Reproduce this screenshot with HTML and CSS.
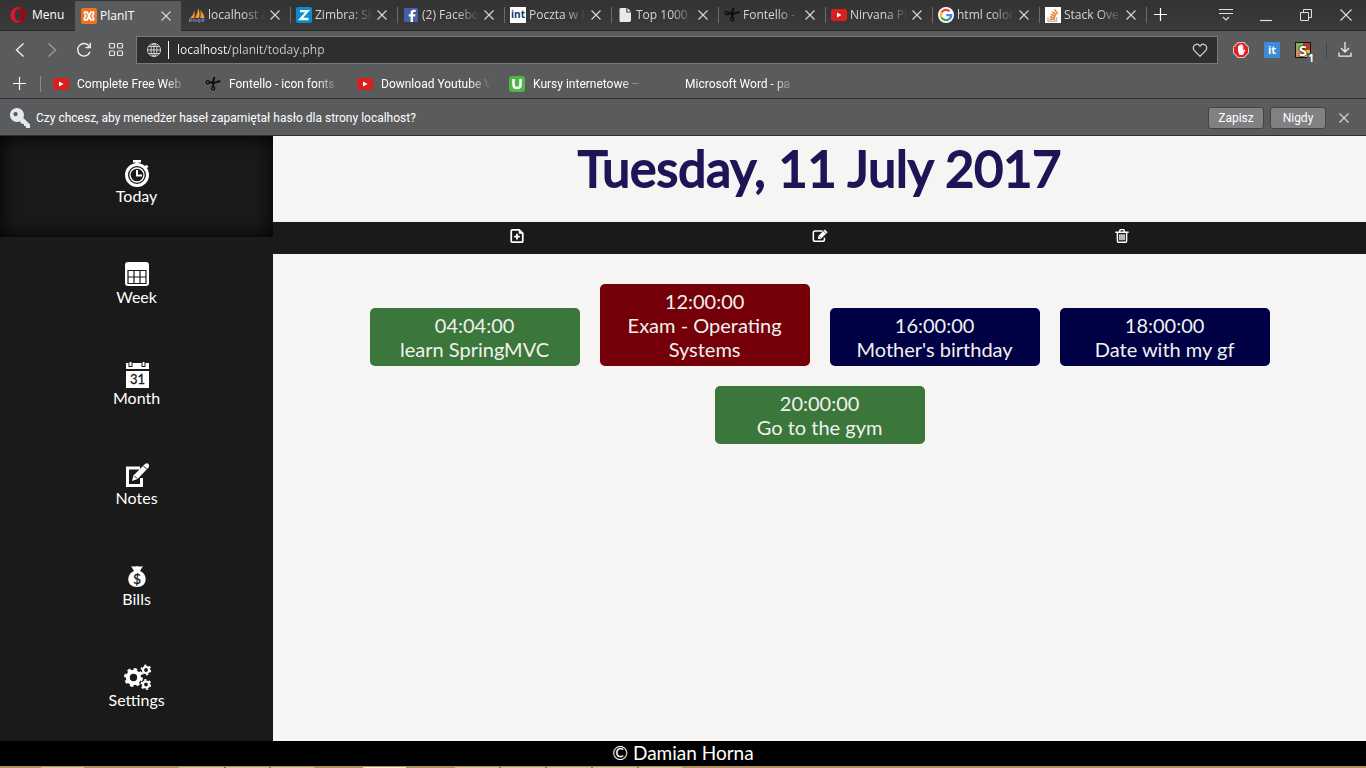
FILE: index.html
```html
<!DOCTYPE html>
<html lang="pl">
<head>
<meta charset="utf-8">
<meta name="viewport" content="width=device-width, initial-scale=1">
<title>PlanIT</title>
<link rel="stylesheet" href="styles.css">
</head>
<body>
<svg class="defs" aria-hidden="true">
  <symbol id="close" viewBox="0 0 12 12"><path d="M1.500 1.500l9 9M10.500 1.500l-9 9" fill="none" stroke="currentColor" stroke-width="1.100"/></symbol>
  <symbol id="plus" viewBox="0 0 14 14"><path d="M6.500 0v13M0 6.500h13" fill="none" stroke="currentColor" stroke-width="1.200"/></symbol>
  <symbol id="youtube" viewBox="0 0 16 16"><rect y="2" width="16" height="12" rx="2.500" fill="#d9201f"/><path d="M6 5.500v5l4.500-2.500z" fill="#fff"/></symbol>
  <symbol id="scissors" viewBox="0 0 16 16"><g fill="none" stroke="#0c0c0c"><circle cx="2.700" cy="6.300" r="1.600" stroke-width="1.200"/><circle cx="8.200" cy="12.300" r="1.600" stroke-width="1.200"/><path d="M4.300 6.300l5 .5 6-1.800M8.300 10.700l-.3-5L9.500 1" stroke-width="1.900"/></g></symbol>
</svg>

<header class="browser">
  <div class="tabbar">
    <button class="menu" type="button">
      <svg class="icon16" viewBox="0 0 16 16" aria-hidden="true"><ellipse cx="8" cy="8" rx="7.700" ry="7.900" fill="#e3132a"/><path d="M8 .100c10.300 0 10.300 15.800 0 15.800 4-1 4-14.800 0-15.800z" fill="#a3020e"/><ellipse cx="8" cy="8" rx="3.400" ry="5.900" fill="#373737"/></svg>
      Menu
    </button>
    <nav class="tabs" aria-label="Karty">
      <div class="tab tab-active">
        <svg class="icon16" viewBox="0 0 16 16" aria-hidden="true"><rect width="16" height="16" rx="2" fill="#ef7422"/><path d="M3.500 6V4H6l4 8h2.500v-2.500L11 8l1.500-1.500V4H10l-4 8H3.500V9.500L5 8 3.500 6.500" fill="none" stroke="#fff" stroke-width="1.700" stroke-linejoin="round"/></svg>
        <a class="tab-title" href="#">PlanIT</a>
        <button class="close" type="button" aria-label="Zamknij"><svg><use href="#close"/></svg></button>
      </div>
      <div class="tab">
        <svg class="icon16" viewBox="0 0 16 16" aria-hidden="true"><path d="M1 11c3-2 4-5 4-8 1 3 1 6 0 8zM6 11c2-4 3-7 3-10 2 4 2 7 1 10zM11 11c1-3 1-5 0-8 3 3 4 5 4.500 8z" fill="#f29a2e"/><path d="M.5 15v-3h2.500v2h-2M5 11.500V15m0-2h2v2M9 12v3h2v-2.500H9M13 15v-3h2v2h-2" fill="none" stroke="#7c80bc"/></svg>
        <a class="tab-title" href="#">localhost /</a>
        <button class="close" type="button" aria-label="Zamknij"><svg><use href="#close"/></svg></button>
      </div>
      <div class="tab">
        <svg class="icon16" viewBox="0 0 16 16" aria-hidden="true"><rect width="16" height="16" rx="2" fill="#0a8bcc"/><path d="M4 4.200h7.500L4.500 12H12.500" fill="none" stroke="#fff" stroke-width="2.300"/></svg>
        <a class="tab-title" href="#">Zimbra: Sk</a>
        <button class="close" type="button" aria-label="Zamknij"><svg><use href="#close"/></svg></button>
      </div>
      <div class="tab">
        <svg class="icon16" viewBox="0 0 16 16" aria-hidden="true"><rect x="1" y="1" width="14" height="14" rx="1" fill="#4560a8"/><path d="M10 15V9.500h2.200l.3-2.300H10V6q0-1.100 1.200-1.100h1.400V2.800q-5-.8-5 2.700v1.700H5.700v2.300h1.900V15z" fill="#fff"/></svg>
        <a class="tab-title" href="#">(2) Facebo</a>
        <button class="close" type="button" aria-label="Zamknij"><svg><use href="#close"/></svg></button>
      </div>
      <div class="tab">
        <span class="fav fav-int">int</span>
        <a class="tab-title" href="#">Poczta w I</a>
        <button class="close" type="button" aria-label="Zamknij"><svg><use href="#close"/></svg></button>
      </div>
      <div class="tab">
        <svg class="icon16" viewBox="0 0 16 16" aria-hidden="true"><path d="M3.500 1h5.800v4.500H14V13q0 2-1.500 2h-9Q2.500 15 2.500 13.500v-11Q2.500 1 3.500 1zM10.300 1L14 4.600h-3.700z" fill="#e6e9ee"/></svg>
        <a class="tab-title" href="#">Top 1000</a>
        <button class="close" type="button" aria-label="Zamknij"><svg><use href="#close"/></svg></button>
      </div>
      <div class="tab">
        <svg class="icon16" aria-hidden="true"><use href="#scissors"/></svg>
        <a class="tab-title" href="#">Fontello -</a>
        <button class="close" type="button" aria-label="Zamknij"><svg><use href="#close"/></svg></button>
      </div>
      <div class="tab">
        <svg class="icon16" aria-hidden="true"><use href="#youtube"/></svg>
        <a class="tab-title" href="#">Nirvana Pl</a>
        <button class="close" type="button" aria-label="Zamknij"><svg><use href="#close"/></svg></button>
      </div>
      <div class="tab">
        <svg class="icon16" viewBox="0 0 16 16" aria-hidden="true"><circle cx="8" cy="8" r="8" fill="#fff"/><g fill="none" stroke-width="2.300"><path d="M11.600 4.400A5.200 5.200 0 0 0 3.500 5.500" stroke="#ea4335"/><path d="M3.500 5.500a5.200 5.200 0 0 0 0 5" stroke="#fbbc05"/><path d="M3.500 10.500a5.200 5.200 0 0 0 7.800 1.500" stroke="#34a853"/><path d="M11.300 12q1.800-1.500 1.900-3.900H8.200" stroke="#4285f4"/></g></svg>
        <a class="tab-title" href="#">html color</a>
        <button class="close" type="button" aria-label="Zamknij"><svg><use href="#close"/></svg></button>
      </div>
      <div class="tab">
        <svg class="icon16" viewBox="0 0 16 16" aria-hidden="true"><rect width="16" height="16" fill="#fff"/><path d="M3 10v4.300h8.500V10" fill="none" stroke="#bcbbbb" stroke-width="1.400"/><path d="M4.700 12.300h5.200M4.900 9.800l5.100 1.100M5.700 7.200l4.800 2.300M7.300 4.600l4 3.500M9.700 2.500l3 4.300" stroke="#ef7c23" stroke-width="1.400"/></svg>
        <a class="tab-title" href="#">Stack Ove</a>
        <button class="close" type="button" aria-label="Zamknij"><svg><use href="#close"/></svg></button>
      </div>
    </nav>
    <button class="newtab" type="button" aria-label="Nowa karta"><svg><use href="#plus"/></svg></button>
    <div class="winctl">
      <button type="button" aria-label="Menu kart"><svg viewBox="0 0 16 14"><path d="M1 1.500h14M1 5.500h14M5 9l3 3 3-3" fill="none" stroke="currentColor" stroke-width="1.100"/></svg></button>
      <button type="button" aria-label="Minimalizuj"><svg viewBox="0 0 16 14"><path d="M2 12.500h12" stroke="currentColor" stroke-width="1.200"/></svg></button>
      <button type="button" aria-label="Przywróć"><svg viewBox="0 0 16 14"><path d="M2.500 4.500h8v8h-8zM5.500 4.500v-3h8v8h-3" fill="none" stroke="currentColor"/></svg></button>
      <button type="button" aria-label="Zamknij okno"><svg viewBox="0 0 16 14"><path d="M2.500 1.500l11 11M13.500 1.500l-11 11" stroke="currentColor" stroke-width="1.100"/></svg></button>
    </div>
  </div>

  <div class="toolbar">
    <div class="navbtns">
      <button type="button" aria-label="Wstecz"><svg viewBox="0 0 16 16"><path d="M11.500 1.500L4.500 8l7 6.500" fill="none" stroke="#f0f0f0" stroke-width="1.400"/></svg></button>
      <button type="button" aria-label="Dalej"><svg viewBox="0 0 16 16"><path d="M4.500 1.500l7 6.500-7 6.500" fill="none" stroke="#97989a" stroke-width="1.400"/></svg></button>
      <button type="button" aria-label="Odśwież"><svg viewBox="0 0 16 16"><path d="M13.300 4.300A6.300 6.300 0 1 0 14 9.800M14.300.8v4.700H9.500" fill="none" stroke="#f0f0f0" stroke-width="1.400"/></svg></button>
      <button type="button" aria-label="Szybkie wybieranie"><svg viewBox="0 0 16 16"><g fill="none" stroke="#e6e6e6" stroke-width="1.200"><rect x="1.500" y="1.500" width="5" height="4.500" rx="1"/><rect x="9.500" y="1.500" width="5" height="4.500" rx="1"/><rect x="1.500" y="9" width="5" height="4.500" rx="1"/><rect x="9.500" y="9" width="5" height="4.500" rx="1"/></g></svg></button>
    </div>
    <div class="address">
      <svg class="icon16" viewBox="0 0 16 16" aria-hidden="true"><g fill="none" stroke="#d0d2d4"><circle cx="8" cy="8" r="6.500"/><ellipse cx="8" cy="8" rx="3" ry="6.500"/><path d="M8 1v14M1 8h14M2.500 4.500h11M2.500 11.500h11"/></g></svg>
      <input type="text" aria-label="Adres" value="localhost/planit/today.php">
      <button type="button" aria-label="Dodaj do zakładek"><svg viewBox="0 0 16 16"><path d="M8 14.300L2 8.200C-.5 4 4.800-.2 8 4.200 11.200-.2 16.500 4 14 8.200z" fill="none" stroke="#d0d2d4" stroke-width="1.200"/></svg></button>
    </div>
    <div class="extensions">
      <svg class="icon16" viewBox="0 0 16 16" aria-hidden="true"><path d="M5 0h6l5 5v6l-5 5H5l-5-5V5z" fill="#eee"/><path d="M5.300.8h5.400l4.500 4.500v5.400l-4.500 4.500H5.300L.8 10.700V5.300z" fill="#e32126"/><path d="M5 9V4.200q.7-.8 1.300 0V3q.7-.8 1.400 0v-.5q.7-.7 1.300 0v1q.7-.8 1.300.2V8.500l1.200-1q1.200 0 .6 1L10 13H6.500z" fill="#fff"/></svg>
      <span class="fav fav-it">it</span>
      <span class="fav fav-s">S<span class="count">1</span></span>
      <button type="button" class="download" aria-label="Pobrane"><svg viewBox="0 0 16 16"><path d="M8 0v9.500M4 6l4 4 4-4M2 10.500v3.700h12v-3.700" fill="none" stroke="#ededed" stroke-width="1.300"/></svg></button>
    </div>
  </div>

  <nav class="bookmarks" aria-label="Zakładki">
    <button class="newmark" type="button" aria-label="Dodaj"><svg><use href="#plus"/></svg></button>
    <a href="#"><svg class="icon16" aria-hidden="true"><use href="#youtube"/></svg><span>Complete Free Web</span></a>
    <a href="#"><svg class="icon16" aria-hidden="true"><use href="#scissors"/></svg><span>Fontello - icon fonts</span></a>
    <a href="#"><svg class="icon16" aria-hidden="true"><use href="#youtube"/></svg><span>Download Youtube V</span></a>
    <a href="#"><svg class="icon16" viewBox="0 0 16 16" aria-hidden="true"><rect width="16" height="16" rx="3" fill="#4db748"/><path d="M4.500 3v5.500q0 3.500 3.500 3.500t3.500-3.500V3" fill="none" stroke="#fff" stroke-width="2.500"/></svg><span>Kursy internetowe –</span></a>
    <a href="#"><i class="icon16"></i><span>Microsoft Word - pa</span></a>
  </nav>

  <div class="prompt" role="alert">
    <svg class="key" viewBox="0 0 20 20" aria-hidden="true"><path d="M7 0a7 7 0 1 1-.1 0zM5.500 4A2.100 2.100 0 1 0 5.600 4z" fill="#e6e9ec" fill-rule="evenodd"/><path d="M9 12.500L12.500 9l7.500 7.500V20h-4v-2h-2v-2h-2z" fill="#e6e9ec"/></svg>
    <p>Czy chcesz, aby menedżer haseł zapamiętał hasło dla strony localhost?</p>
    <button class="answer" type="button">Zapisz</button>
    <button class="answer" type="button">Nigdy</button>
    <button class="close" type="button" aria-label="Zamknij"><svg><use href="#close"/></svg></button>
  </div>
</header>

<div class="page">
  <nav class="sidebar" aria-label="PlanIT">
    <a class="current" href="#">
      <svg viewBox="0 0 28 28" aria-hidden="true"><path d="M10 1h8v2.500h-2.500V5h-3V3.500H10z" fill="#fff"/><path d="M21.500 7l2.500 2.500 1.500-2-2-1.500z" fill="#fff"/><circle cx="14" cy="16" r="10.500" fill="none" stroke="#fff" stroke-width="3"/><circle cx="14" cy="16" r="7" fill="none" stroke="#fff" stroke-width="1.300"/><path d="M14 11v5.500h5" fill="none" stroke="#fff" stroke-width="2"/></svg>Today</a>
    <a href="#">
      <svg viewBox="0 0 28 28" aria-hidden="true"><rect x="2" y="2" width="24" height="24" rx="3" fill="#fff"/><path d="M5 10.500h18v13H5zM5 17h18M11 10.500v13M17 10.500v13" fill="none" stroke="#1a1a1a" stroke-width="1.200"/></svg>Week</a>
    <a href="#">
      <svg viewBox="0 0 28 28" aria-hidden="true"><path d="M3 2h2.500v4h4V2h9v4h4V2H26v6H3zM3 10h23v17H3z" fill="#fff"/><path d="M6.500 1h2v4h-2zM19.500 1h2v4h-2z" fill="#fff"/><text x="14.500" y="23" text-anchor="middle" class="glyph-month">31</text></svg>Month</a>
    <a href="#">
      <svg viewBox="0 0 28 28" aria-hidden="true"><path d="M17 7H4.500v17.500h14V17" fill="none" stroke="#fff" stroke-width="3"/><path d="M9 20l1.500-5.500L22 3q2-1.500 3.500 0t0 3.500L14.500 18z" fill="#fff"/><path d="M11.500 15l2.500 2.500M20.500 5l3 3" stroke="#1a1a1a" stroke-width="1"/></svg>Notes</a>
    <a href="#">
      <svg viewBox="0 0 28 28" aria-hidden="true"><path d="M8 4q3 1 6 0 3 1 6 0l-3 5c8 3 8 16-3 16S3 12 11 9z" fill="#fff"/><text x="14" y="21.500" text-anchor="middle" class="glyph-dollar">$</text></svg>Bills</a>
    <a href="#">
      <svg viewBox="0 0 28 28" aria-hidden="true"><g fill="none" stroke="#fff"><circle cx="10.500" cy="14.500" r="5.700" stroke-width="4"/><circle cx="10.500" cy="14.500" r="8.200" stroke-width="2.500" stroke-dasharray="3.400 3.040"/><circle cx="23" cy="7" r="3" stroke-width="2.200"/><circle cx="23" cy="7" r="4.700" stroke-width="1.600" stroke-dasharray="2.300 2.620"/><circle cx="23" cy="21.500" r="3" stroke-width="2.200"/><circle cx="23" cy="21.500" r="4.700" stroke-width="1.600" stroke-dasharray="2.300 2.620"/></g></svg>Settings</a>
  </nav>

  <main class="content">
    <h1>Tuesday, 11 July 2017</h1>
    <div class="actions">
      <button type="button" aria-label="Add"><svg viewBox="0 0 18 18"><path d="M4 2h7.500l4 4v8.500q0 1.500-1.500 1.500H4q-1.500 0-1.500-1.500v-11Q2.500 2 4 2z" fill="none" stroke="#fff" stroke-width="2"/><path d="M11 1.500V6.500h4.500z" fill="#fff"/><path d="M9 6.500v6.500M5.800 9.800h6.400" stroke="#fff" stroke-width="2"/></svg></button>
      <button type="button" aria-label="Edit"><svg viewBox="0 0 18 18"><path d="M12 3.300H3.500q-2 0-2 2v7.500q0 2 2 2H12q2 0 2-2V11" fill="none" stroke="#fff" stroke-width="1.700"/><path d="M6.800 12.500V9.300L14.500 1.700l3 3-7.700 7.800z" fill="#fff"/><path d="M8 9.500l2 2M13 3.500l2.500 2.500" stroke="#1a1a1a" stroke-width=".8"/></svg></button>
      <button type="button" aria-label="Delete"><svg viewBox="0 0 18 18"><path d="M1.500 4.700h15M6 4.500L7 1.800h4l1 2.700M3.800 5v9.500q0 1.500 1.200 1.500h8q1.200 0 1.200-1.500V5M6.700 7v6.800M9 7v6.800M11.300 7v6.800" fill="none" stroke="#fff" stroke-width="1.600"/></svg></button>
    </div>
    <div class="events">
      <article class="event green"><time>04:04:00</time>learn SpringMVC</article>
      <article class="event red"><time>12:00:00</time>Exam - Operating Systems</article>
      <article class="event navy"><time>16:00:00</time>Mother's birthday</article>
      <article class="event navy"><time>18:00:00</time>Date with my gf</article>
      <article class="event green"><time>20:00:00</time>Go to the gym</article>
    </div>
  </main>
</div>

<footer class="footer">© Damian Horna</footer>
<div class="taskbar"></div>
</body>
</html>
```
FILE: styles.css
```css
* { box-sizing: border-box; }

body {
  margin: 0;
  min-height: 100vh;
  display: flex;
  flex-direction: column;
  font-family: Lato, sans-serif;
  background: #000;
}

button {
  padding: 0;
  border: 0;
  background: none;
  color: inherit;
  font: inherit;
}

a { color: inherit; text-decoration: none; }
svg { display: block; }
.defs { display: none; }
.icon16 { width: 16px; height: 16px; flex: none; }

/* Browser chrome */
.browser {
  background: #5a5b5d;
  color: #fff;
  font: 12px/16px "Open Sans", sans-serif;
}

.tabbar {
  display: flex;
  height: 31px;
  background: linear-gradient(#333, #3a3a3a);
  border-bottom: 1px solid #262626;
}

.menu {
  width: 75px;
  flex: none;
  display: flex;
  align-items: center;
  gap: 6px;
  padding-left: 10px;
}

.tabs { display: flex; min-width: 0; }

.tab {
  width: 107px;
  min-width: 0;
  display: flex;
  align-items: center;
  gap: 3px;
  padding: 0 10px 0 5px;
  color: #d6d6d6;
  background: linear-gradient(#6a6a6a, #6a6a6a) right center / 1px 16px no-repeat;
}

.tab-active {
  width: 106px;
  margin: 1px 3px -1px 0;
  padding: 0 9px 1px 6px;
  color: #fff;
  background: #5a5b5d;
}

.tab-title {
  flex: 1;
  min-width: 0;
  overflow: hidden;
  white-space: nowrap;
  mask-image: linear-gradient(to right, #000 60%, transparent);
}

.tab-active .tab-title { mask-image: none; }

.close svg { width: 12px; height: 12px; }
.close { color: #d8dadc; flex: none; }

.newtab { width: 28px; flex: none; }
.newtab svg, .newmark svg { width: 14px; height: 14px; margin: auto; }

.winctl {
  margin-left: auto;
  display: flex;
  color: #e0e0e0;
}
.winctl button { width: 40px; }
.winctl svg { width: 16px; height: 14px; margin: auto; }

.fav {
  position: relative;
  width: 16px;
  height: 16px;
  flex: none;
  text-align: center;
  font-weight: 700;
}
.fav-int { background: #fff; color: #153a6b; font-size: 10px; line-height: 15px; }
.fav-it { background: #3f8bd6; border-radius: 1px; font-size: 11px; line-height: 15px; }
.fav-s {
  background: conic-gradient(#b83b2c 25%, #e8c83a 0 50%, #d98b63 0 75%, #8bb04c 0);
  border: 1px solid #111;
  font-size: 15px;
  line-height: 14px;
  text-shadow: 0 0 1px #000, 0 0 2px #000;
}
.count {
  position: absolute;
  right: -5px;
  bottom: -6px;
  padding: 0 1px;
  background: #5a5b5d;
  font-size: 10px;
  line-height: 10px;
  text-shadow: none;
}

.toolbar {
  display: flex;
  align-items: center;
  height: 37px;
}

.navbtns { display: flex; gap: 16px; padding: 0 12px; }
.navbtns svg { width: 16px; height: 16px; }

.address {
  flex: 1;
  display: flex;
  align-items: center;
  height: 28px;
  padding: 0 9px;
  background: #2d2f2e;
  border: 1px solid #77787a;
}
.address svg { width: 16px; height: 16px; }
.address input {
  flex: 1;
  min-width: 0;
  height: 18px;
  margin-left: 6px;
  padding: 0 0 0 8px;
  border: 0;
  border-left: 1px solid #fff;
  font: 12px/18px "Open Sans", sans-serif;
  color: transparent;
  background: linear-gradient(to right, #fff 60px, #d0d1d1 60px) text;
}

.extensions { display: flex; align-items: center; gap: 15px; padding: 0 13px 0 15px; }
.download { border-left: 1px solid #454648; padding-left: 10px; }
.download svg { width: 16px; height: 16px; }

.bookmarks {
  display: flex;
  align-items: center;
  height: 31px;
  padding-top: 1px;
  border-bottom: 1px solid #2e2e30;
  font-family: Roboto, sans-serif;
}
.newmark {
  width: 41px;
  height: 16px;
  border-right: 1px solid #8a8b8d;
}
.bookmarks a {
  display: flex;
  align-items: center;
  gap: 8px;
  width: 152px;
  padding-left: 12px;
}
.bookmarks span {
  width: 110px;
  overflow: hidden;
  white-space: nowrap;
  mask-image: linear-gradient(to right, #000 80%, transparent);
}

.prompt {
  display: flex;
  align-items: center;
  height: 37px;
  padding: 1px 16px 0 10px;
  gap: 6px;
  border-bottom: 1px solid #2e2e30;
  font-family: Roboto, sans-serif;
}
.prompt p { flex: 1; margin: 0; }
.key { width: 20px; height: 20px; flex: none; }
.answer {
  min-width: 56px;
  height: 22px;
  padding: 0 9px;
  border: 1px solid #424345;
  border-radius: 3px;
  background: #808183;
}
.prompt .close { margin-left: 6px; }

/* Planner */
.page { flex: 1; display: flex; }

.sidebar {
  width: 20%;
  display: flex;
  flex-direction: column;
  background: #1a1a1a;
  color: #fff;
  font-size: 16px;
  line-height: 18px;
}
.sidebar a {
  flex: 1;
  display: flex;
  flex-direction: column;
  align-items: center;
  padding: 23px 0 31px;
}
.sidebar svg { width: 28px; height: 28px; }
.sidebar .current { box-shadow: inset 0 0 20px #000; }
.glyph-month { font: 13px Lato, sans-serif; fill: #1a1a1a; stroke: #1a1a1a; stroke-width: .3px; }
.glyph-dollar { font: 14px Lato, sans-serif; fill: #1a1a1a; stroke: #1a1a1a; stroke-width: .3px; }

.content { flex: 1; background: #f6f5f3; }

h1 {
  margin: 0;
  padding-bottom: 22px;
  text-align: center;
  font-size: 50px;
  font-weight: 400;
  line-height: 64px;
  color: #201457;
  -webkit-text-stroke: 2px #201457;
}

.actions {
  display: grid;
  grid-template-columns: repeat(3, 1fr);
  padding: 0 8.5%;
  height: 32px;
  background: #1a1a1a;
}
.actions svg { width: 16px; height: 16px; margin: 0 auto 4px; }

.events {
  display: flex;
  flex-wrap: wrap;
  justify-content: center;
  align-items: flex-end;
  gap: 20px;
  padding: 30px 0;
}
.event {
  width: 210px;
  padding: 5px;
  border-radius: 5px;
  text-align: center;
  font-size: 20px;
  line-height: 24px;
  color: #f1f1ee;
}
.event time { display: block; }
.green { background: #3b763b; }
.red { background: #750009; }
.navy { background: #000044; }

.footer {
  height: 25px;
  text-align: center;
  font-size: 19px;
  line-height: 24px;
  color: #fff;
  background: #000;
}

.taskbar {
  height: 2px;
  background:
    linear-gradient(to right, transparent 41px, #dcc4a2 41px 84px, transparent 84px 179px, #dcc4a2 179px 224px, #8d6f42 224px 226px, #dcc4a2 226px 269px, #8d6f42 269px 271px, #dcc4a2 271px 314px, transparent 314px 363px, #f6e9dc 363px 406px, transparent 406px 455px, #dcc4a2 455px 499px, #8d6f42 499px 501px, #dcc4a2 501px 545px, #8d6f42 545px 547px, #dcc4a2 547px 591px, #8d6f42 591px 593px, #dcc4a2 593px 637px, #8d6f42 637px 639px, #dcc4a2 639px 682px, transparent 682px) bottom / 100% 1px no-repeat,
    #b3905a;
}
```
